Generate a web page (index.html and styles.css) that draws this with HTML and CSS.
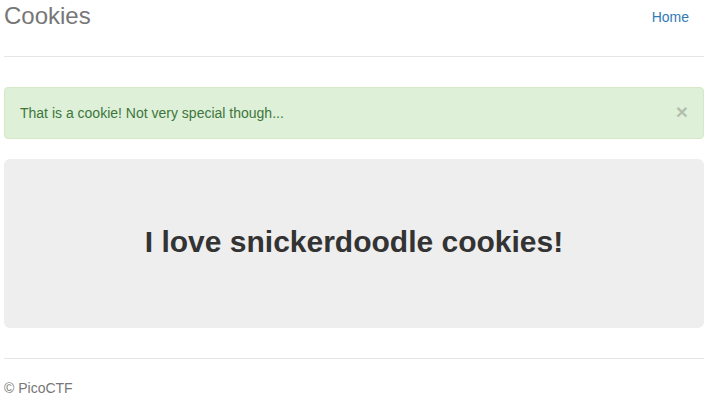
FILE: index.html
```html
<!DOCTYPE html>
<html>
<head>
<meta charset="utf-8">
<title>Cookies</title>
<link rel="stylesheet" href="styles.css">
</head>
<body>
<div class="container">
  <div class="header">
    <h3 class="brand">Cookies</h3>
    <ul class="nav">
      <li><a href="#">Home</a></li>
    </ul>
  </div>
  <div class="alert">
    <span class="close">&times;</span>
    That is a cookie! Not very special though...
  </div>
  <div class="jumbotron">
    <h2 class="title">I love snickerdoodle cookies!</h2>
  </div>
  <div class="footer">&copy; PicoCTF</div>
</div>
</body>
</html>
```
FILE: styles.css
```css
html, body {
  margin: 0;
  padding: 0;
  background: #fff;
}
body {
  font-family: "Liberation Sans", Arial, sans-serif;
  font-size: 14px;
  line-height: 20px;
  color: #333;
}
.container {
  width: 700px;
  margin-left: 4px;
}
.header {
  display: flex;
  justify-content: space-between;
  align-items: center;
  padding-bottom: 24px;
  border-bottom: 1px solid #e5e5e5;
}
.brand {
  margin: 0;
  font-size: 24px;
  font-weight: 500;
  line-height: 32px;
  color: #777;
}
.nav {
  list-style: none;
  margin: 0;
  padding: 0;
}
.nav a {
  display: block;
  padding: 7px 15px 5px;
  color: #337ab7;
  text-decoration: none;
}
.alert {
  position: relative;
  margin-top: 30px;
  margin-bottom: 20px;
  padding: 15px 35px 15px 15px;
  background: #dff0d8;
  border: 1px solid #d6e9c6;
  border-radius: 4px;
  color: #3c763d;
}
.close {
  position: absolute;
  top: 14px;
  right: 15px;
  font-size: 21px;
  font-weight: bold;
  line-height: 20px;
  color: #000;
  opacity: 0.2;
}
.jumbotron {
  background: #eee;
  border-radius: 6px;
  height: 169px;
  display: flex;
  align-items: center;
  justify-content: center;
  margin-bottom: 30px;
}
.title {
  margin: 0;
  font-size: 30px;
  font-weight: bold;
  line-height: 33px;
  color: #333;
  position: relative;
  top: -2px;
}
.footer {
  border-top: 1px solid #e5e5e5;
  padding-top: 19px;
  color: #777;
}
```
